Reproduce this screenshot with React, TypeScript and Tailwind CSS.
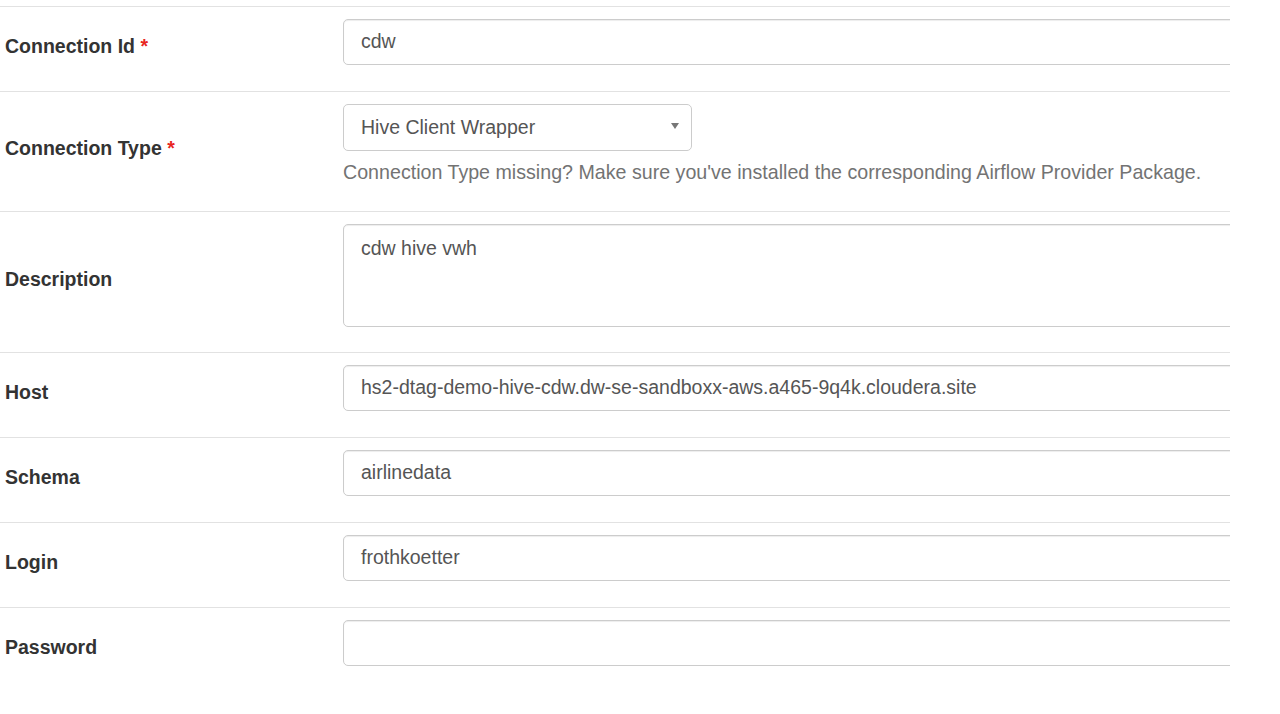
import React from "react";

const font = "font-['Liberation_Sans',Arial,Helvetica,sans-serif]";

function FieldRow({
  label,
  required,
  children,
  bottom = "pb-[26px]",
}: {
  label: string;
  required?: boolean;
  children: React.ReactNode;
  bottom?: string;
}) {
  return (
    <div className="flex items-center border-t border-[#e2e2e2]">
      <div className="w-[343px] shrink-0 pl-[5px]">
        <label className="block mb-[7px] text-[19.5px] leading-[28px] font-bold text-[#333]">
          {label}
          {required && <span className="text-[#e8251f]"> *</span>}
        </label>
      </div>
      <div className={`flex-1 min-w-0 pt-[12px] ${bottom}`}>{children}</div>
    </div>
  );
}

function TextBox({ value }: { value: string }) {
  return (
    <div className="w-[960px] h-[46px] flex items-center px-[17px] border border-[#cccccc] rounded-[5px] shadow-[inset_0_1px_1px_rgba(0,0,0,0.075)] text-[19.5px] text-[#555] bg-white whitespace-nowrap">
      {value}
    </div>
  );
}

export default function App() {
  return (
    <div className={`w-[1230px] h-[714px] overflow-hidden bg-white pt-[6px] ${font}`}>
      <FieldRow label="Connection Id" required>
        <TextBox value="cdw" />
      </FieldRow>

      <FieldRow label="Connection Type" required bottom="pb-[25px]">
        <div className="w-[349px] h-[47px] flex items-center justify-between pl-[17px] pr-[12px] border border-[#cccccc] rounded-[5px] text-[19.5px] text-[#555] bg-white">
          <span>Hive Client Wrapper</span>
          <svg width="8" height="6" viewBox="0 0 8 6" className="mb-[4px]">
            <path d="M0 0 H8 L4 6 Z" fill="#777" />
          </svg>
        </div>
        <p className="mt-[7px] text-[19.65px] leading-[28px] text-[#737373] whitespace-nowrap">
          Connection Type missing? Make sure you've installed the corresponding Airflow Provider Package.
        </p>
      </FieldRow>

      <FieldRow label="Description" bottom="pb-[25px]">
        <div className="w-[960px] h-[103px] px-[17px] pt-[9px] border border-[#cccccc] rounded-[5px] shadow-[inset_0_1px_1px_rgba(0,0,0,0.075)] text-[19.5px] leading-[28px] text-[#555] bg-white">
          cdw hive vwh
        </div>
      </FieldRow>

      <FieldRow label="Host">
        <TextBox value="hs2-dtag-demo-hive-cdw.dw-se-sandboxx-aws.a465-9q4k.cloudera.site" />
      </FieldRow>

      <FieldRow label="Schema">
        <TextBox value="airlinedata" />
      </FieldRow>

      <FieldRow label="Login">
        <TextBox value="frothkoetter" />
      </FieldRow>

      <FieldRow label="Password">
        <TextBox value="" />
      </FieldRow>
    </div>
  );
}
